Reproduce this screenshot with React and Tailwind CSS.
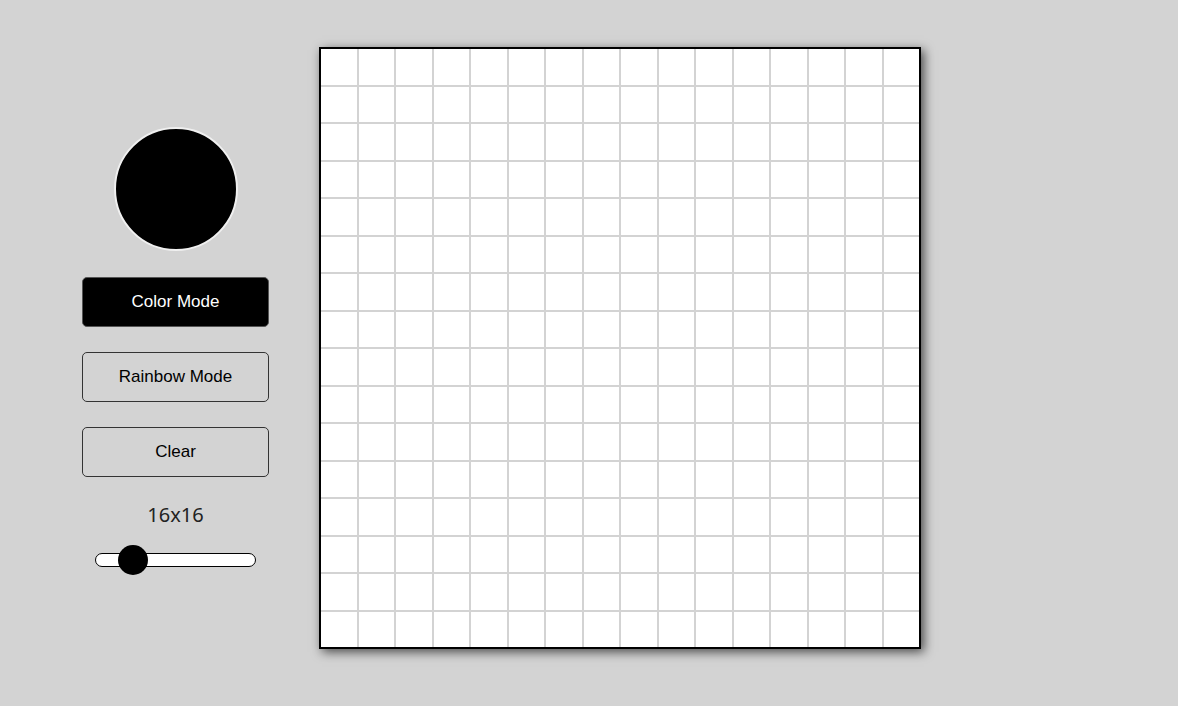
import React from 'react';

const SIZE = 16;

const ModeButton = ({ label, active }) => (
    <button
        className={
            active
                ? 'w-[187px] h-[50px] rounded-[5px] border border-[#555] bg-black text-white text-[17px]'
                : 'w-[187px] h-[50px] rounded-[5px] border border-[#333] bg-transparent text-black text-[17px]'
        }
    >
        {label}
    </button>
);

const App = () => {
    const cells = Array.from({ length: SIZE * SIZE });
    // slider thumb position (value 16)
    const thumbLeft = 23;

    return (
        <div className="min-h-[706px] w-full bg-[#d3d3d3] flex items-start font-['Liberation_Sans',Arial,sans-serif]">
            <div className="w-[187px] ml-[82px] mt-[127px] flex flex-col items-center">
                <div className="w-[124px] h-[124px] rounded-full bg-black border-2 border-[#f0f0f0]"></div>
                <div className="mt-[26px] flex flex-col gap-[25px]">
                    <ModeButton label="Color Mode" active />
                    <ModeButton label="Rainbow Mode" />
                    <ModeButton label="Clear" />
                </div>
                <div className="mt-[24px] text-[20px] leading-[28px] text-[#222] font-['Noto_Sans',sans-serif]">16x16</div>
                <div className="relative mt-[16px] w-[161px] h-[30px] flex items-center">
                    <div className="w-full h-[14px] rounded-full bg-white border border-black"></div>
                    <div
                        className="absolute top-0 w-[30px] h-[30px] rounded-full bg-black"
                        style={{ left: thumbLeft }}
                    ></div>
                </div>
            </div>
            <div className="ml-[50px] mt-[47px] w-[602px] h-[602px] border-2 border-black bg-white shadow-[3px_3px_10px_rgba(0,0,0,0.65)]">
                <div className="w-full h-full grid grid-cols-16 grid-rows-16 gap-[2px] bg-[#d3d3d3]">
                    {cells.map((_, i) => (
                        <div key={i} className="bg-white"></div>
                    ))}
                </div>
            </div>
        </div>
    );
};

export default App;
